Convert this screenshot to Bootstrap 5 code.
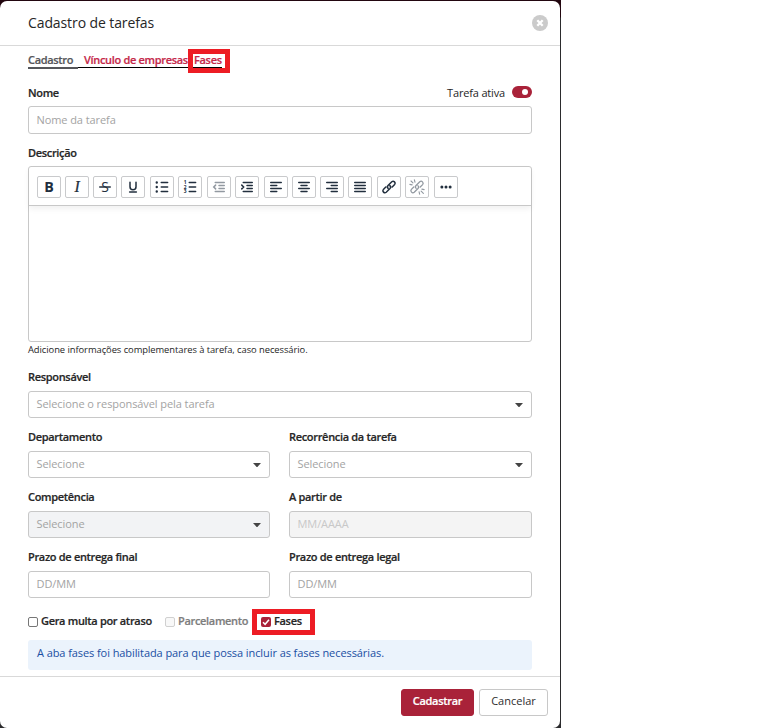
<!DOCTYPE html>
<html lang="pt-BR">
<head>
<meta charset="utf-8">
<title>Cadastro de tarefas</title>
<meta name="viewport" content="width=device-width, initial-scale=1">
<link href="https://cdn.jsdelivr.net/npm/bootstrap@5.3.0/dist/css/bootstrap.min.css" rel="stylesheet">
<style>
body{font-family:"Open Sans","Noto Sans",sans-serif;font-size:11px;line-height:16px;letter-spacing:-.08px;color:#262626;background:#fff;overflow:hidden}
.backdrop-area{width:561px;height:728px;padding:1px 1px 0 0;background:linear-gradient(#22060f 0,#22060f 17px,#2b2b2d 18px)}
.task-dialog{width:560px;height:727px;border-radius:7px}
.dialog-head{height:45px;padding:0 12px 0 28px;border-bottom:1px solid #d9d9d9}
.dialog-title{font-size:14px;line-height:20px;font-weight:400;letter-spacing:-.1px}
.dialog-main{height:630px;padding:0 28px}
.tab-row,.field-title,.check-row,.act-main{font-weight:600;letter-spacing:-.32px;-webkit-text-stroke:.2px currentColor}
.tab-row{height:36px;padding-top:6px}
.tab-row a{color:#c5284a;height:16px;border-bottom:1px solid #000;text-decoration:none;white-space:nowrap}
.tab-row a.current{color:#55565a;border-bottom:2px solid #55565a;height:17px;width:50px}
.tab-row .t-link{width:110px;padding-left:6px}
.tab-row .t-fases{width:34px;padding-left:6px}
.hl{position:absolute;border:5px solid #ed1c24;pointer-events:none}
.hl-tab{left:0;top:-3px;width:42px;height:24px}
.hl-check{left:-9px;top:-4px;width:63px;height:26px}
.field-title{height:24px;padding-top:3px;white-space:nowrap}
.field .field-title{padding-top:2px}
.form-control{height:27px;min-height:0;padding:0 8px 2px 7.5px;font-size:11px;line-height:16px;letter-spacing:-.08px;border:1px solid #c8c8c8;border-radius:3px}
.form-control::placeholder{color:#a3a3a3;opacity:1}
.form-control:disabled{background:#f4f4f4}
.form-control:disabled::placeholder{color:#c8c8c8}
.name-input{height:28px;padding-bottom:2px}
.pick{border:1px solid #c8c8c8;border-radius:3px;height:27px;padding:0 8px 0 7.5px;color:#a3a3a3}
.pick span{padding-bottom:1px}
.pick.off{background:#f2f3f5}
.field{height:60px}
.pair{display:grid;grid-template-columns:242px 243px;column-gap:19px}
.switch-line{padding-top:3px;gap:7px}
.switch-line .state-text{letter-spacing:-.17px}
.switch-pill{width:20px;height:12px;margin-top:1px;border-radius:6px;background:#a92239;padding-right:4px}
.switch-pill i{width:6px;height:6px;border-radius:50%;background:#fff}
.editor{height:176px;border:1px solid #c8c8c8;border-radius:3px}
.editor-bar{height:39px;padding:9px 0 0 8px;border-bottom:1px solid #c8c8c8;box-shadow:0 3px 6px rgba(0,0,0,.06);gap:5px}
.tool-set{gap:4px}
.tool{width:24px;height:22px;border:1px solid #c9cacc;border-radius:2px;background:#fff;color:#222f3e;padding:0}
.tool.off{color:#9299a1}
.tool svg{width:18px;height:18px;display:block;fill:none;stroke:currentColor;stroke-width:2;stroke-linecap:round}
.tool svg text{fill:currentColor;stroke:none;letter-spacing:0}
.tool svg .slanted{stroke:currentColor;stroke-width:.3}
.hint{font-size:9.4px;line-height:14px;padding-top:1px;height:25px;letter-spacing:-.06px}
.check-row{height:33px;padding-top:6px}
.check-row label{height:16px;gap:3px;white-space:nowrap}
.box{width:10px;height:10px;margin-top:4px;border:1px solid #767676;border-radius:2px;background:#fff}
.box.off{border-color:#d0d0d0;background:#f8f8f8}
.box.on{border:0;background:#a92239}
.box svg{display:block}
.lbl-a{width:137px}.lbl-b{width:96px;color:#7d7d7d}
.note{height:30px;background:#ebf3fc;color:#1a4fa3;border-radius:3px;padding:0 9px 4px}
.dialog-foot{height:51px;border-top:1px solid #d9d9d9;padding:12px 12px 0;gap:5px}
.act{height:27px;font-size:11px;line-height:16px;padding:0 0 3px;border-radius:3px}
.act-main{width:73px;background:#a92239;color:#fff;border:1px solid #a92239}
.act-alt{width:69px;background:#fff;color:#2d2d2d;border:1px solid #c8c8c8}
</style>
<script src="https://cdn.jsdelivr.net/npm/bootstrap@5.3.0/dist/js/bootstrap.bundle.min.js"></script>
</head>
<body>
<div class="backdrop-area">
<div class="task-dialog bg-white d-flex flex-column">
  <header class="dialog-head d-flex align-items-center justify-content-between">
    <h1 class="dialog-title mb-0">Cadastro de tarefas</h1>
    <svg width="16" height="16" viewBox="0 0 16 16"><circle cx="8" cy="8" r="8" fill="#cbcbcb"/><path d="M5.3 5.3l5.4 5.4M10.7 5.3l-5.4 5.4" stroke="#fff" stroke-width="2.3"/></svg>
  </header>
  <main class="dialog-main">
    <nav class="tab-row d-flex">
      <a class="current" href="#">Cadastro</a>
      <a class="t-link" href="#">Vínculo de empresas</a>
      <a class="t-fases position-relative" href="#">Fases<span class="hl hl-tab"></span></a>
    </nav>
    <div class="d-flex justify-content-between">
      <label class="field-title" for="nome">Nome</label>
      <div class="switch-line d-flex align-items-start"><span class="state-text">Tarefa ativa</span><span class="switch-pill d-flex align-items-center justify-content-end"><i></i></span></div>
    </div>
    <input id="nome" class="form-control name-input" placeholder="Nome da tarefa">
    <div class="field-title mt-2">Descrição</div>
    <div class="editor">
      <div class="editor-bar d-flex">
        <div class="tool-set d-flex">
          <button class="tool d-flex align-items-center justify-content-center" aria-label="Negrito"><svg viewBox="0 0 24 24"><text x="12" y="18" text-anchor="middle" font-size="19" font-weight="700">B</text></svg></button>
          <button class="tool d-flex align-items-center justify-content-center" aria-label="Itálico"><svg viewBox="0 0 24 24"><text class="slanted" x="12" y="18.5" text-anchor="middle" font-size="21" font-style="italic" font-family="Liberation Serif">I</text></svg></button>
          <button class="tool d-flex align-items-center justify-content-center" aria-label="Tachado"><svg viewBox="0 0 24 24"><text x="12" y="18.4" text-anchor="middle" font-size="18.5" font-weight="500">S</text><path d="M5 12h14"/></svg></button>
          <button class="tool d-flex align-items-center justify-content-center" aria-label="Sublinhado"><svg viewBox="0 0 24 24"><path d="M8 5.5v6a4 4 0 0 0 8 0v-6M7.500 18.500h9"/></svg></button>
        </div>
        <div class="tool-set d-flex">
          <button class="tool d-flex align-items-center justify-content-center" aria-label="Lista"><svg viewBox="0 0 24 24"><path d="M11 6h8.5M11 12h8.5M11 18h8.5"/><path d="M5 6h.01M5 12h.01M5 18h.01" stroke-width="3.2"/></svg></button>
          <button class="tool d-flex align-items-center justify-content-center" aria-label="Lista numerada"><svg viewBox="0 0 24 24"><path d="M11 6h8.5M11 12h8.5M11 18h8.5"/><g font-size="6.500" font-weight="700" text-anchor="middle"><text x="5.5" y="8.400">1</text><text x="5.5" y="14.500">2</text><text x="5.5" y="20.600">3</text></g></svg></button>
        </div>
        <div class="tool-set d-flex">
          <button class="tool off d-flex align-items-center justify-content-center" aria-label="Diminuir recuo"><svg viewBox="0 0 24 24"><path d="M7 6h12M12 10h7M12 14h7M7 18h12M7.5 9.5L5 12l2.500 2.500"/></svg></button>
          <button class="tool d-flex align-items-center justify-content-center" aria-label="Aumentar recuo"><svg viewBox="0 0 24 24"><path d="M7 6h12M12 10h7M12 14h7M7 18h12M5 9.5L7.5 12 5 14.5"/></svg></button>
        </div>
        <div class="tool-set d-flex">
          <button class="tool d-flex align-items-center justify-content-center" aria-label="Esquerda"><svg viewBox="0 0 24 24"><path d="M5 6h14M5 10h8M5 14h14M5 18h8"/></svg></button>
          <button class="tool d-flex align-items-center justify-content-center" aria-label="Centro"><svg viewBox="0 0 24 24"><path d="M5 6h14M8 10h8M5 14h14M8 18h8"/></svg></button>
          <button class="tool d-flex align-items-center justify-content-center" aria-label="Direita"><svg viewBox="0 0 24 24"><path d="M5 6h14M11 10h8M5 14h14M11 18h8"/></svg></button>
          <button class="tool d-flex align-items-center justify-content-center" aria-label="Justificado"><svg viewBox="0 0 24 24"><path d="M5 6h14M5 10h14M5 14h14M5 18h14"/></svg></button>
        </div>
        <div class="tool-set d-flex">
          <button class="tool d-flex align-items-center justify-content-center" aria-label="Link"><svg viewBox="0 0 24 24"><path d="M10.800 13.800a2.700 2.700 0 0 1-.1-3.800l5-5a2.700 2.700 0 0 1 3.800 3.800l-3.200 3.200M13.200 10.200a2.700 2.700 0 0 1 .1 3.800l-5 5a2.700 2.700 0 0 1-3.800-3.800l3.200-3.200"/></svg></button>
          <button class="tool off d-flex align-items-center justify-content-center" aria-label="Remover link"><svg viewBox="0 0 24 24"><path stroke-width="1.700" d="M10.800 13.800a2.700 2.700 0 0 1-.1-3.800l5-5a2.700 2.700 0 0 1 3.800 3.800l-3.200 3.200M13.200 10.200a2.700 2.700 0 0 1 .1 3.800l-5 5a2.700 2.700 0 0 1-3.800-3.800l3.200-3.200"/><path stroke-width="1.500" d="M2.500 8.500l3 .7M4 4l2.600 2.600M8.500 2.500l.8 3M21.500 15.500l-3-.7M20.500 20.500l-3-3M15.500 21.500l-.7-3"/></svg></button>
        </div>
        <div class="tool-set d-flex">
          <button class="tool d-flex align-items-center justify-content-center" aria-label="Mais"><svg viewBox="0 0 24 24"><path d="M6.500 12h.01M12 12h.01M17.500 12h.01" stroke-width="4"/></svg></button>
        </div>
      </div>
    </div>
    <div class="hint">Adicione informações complementares à tarefa, caso necessário.</div>
    <div class="field">
      <div class="field-title">Responsável</div>
      <div class="pick d-flex align-items-center justify-content-between"><span>Selecione o responsável pela tarefa</span><svg width="8" height="4" viewBox="0 0 8 4"><path d="M0 0h8L4.600 3.700a.9.9 0 0 1-1.200 0z" fill="#444"/></svg></div>
    </div>
    <div class="pair">
      <div class="field">
        <div class="field-title">Departamento</div>
        <div class="pick d-flex align-items-center justify-content-between"><span>Selecione</span><svg width="8" height="4" viewBox="0 0 8 4"><path d="M0 0h8L4.600 3.700a.9.9 0 0 1-1.200 0z" fill="#444"/></svg></div>
      </div>
      <div class="field">
        <div class="field-title">Recorrência da tarefa</div>
        <div class="pick d-flex align-items-center justify-content-between"><span>Selecione</span><svg width="8" height="4" viewBox="0 0 8 4"><path d="M0 0h8L4.600 3.700a.9.9 0 0 1-1.200 0z" fill="#444"/></svg></div>
      </div>
      <div class="field">
        <div class="field-title">Competência</div>
        <div class="pick off d-flex align-items-center justify-content-between"><span>Selecione</span><svg width="8" height="4" viewBox="0 0 8 4"><path d="M0 0h8L4.600 3.700a.9.9 0 0 1-1.200 0z" fill="#444"/></svg></div>
      </div>
      <div class="field">
        <div class="field-title">A partir de</div>
        <input class="form-control" placeholder="MM/AAAA" disabled>
      </div>
      <div class="field">
        <div class="field-title">Prazo de entrega final</div>
        <input class="form-control" placeholder="DD/MM">
      </div>
      <div class="field">
        <div class="field-title">Prazo de entrega legal</div>
        <input class="form-control" placeholder="DD/MM">
      </div>
    </div>
    <div class="check-row d-flex">
      <label class="lbl-a d-flex"><span class="box"></span>Gera multa por atraso</label>
      <label class="lbl-b d-flex"><span class="box off"></span>Parcelamento</label>
      <label class="d-flex position-relative"><span class="box on"><svg width="10" height="10" viewBox="0 0 10 10"><path d="M2 5.200l2.100 2.100L8 2.700" fill="none" stroke="#fff" stroke-width="1.500"/></svg></span>Fases<span class="hl hl-check"></span></label>
    </div>
    <div class="note d-flex align-items-center">A aba fases foi habilitada para que possa incluir as fases necessárias.</div>
  </main>
  <footer class="dialog-foot d-flex justify-content-end">
    <button class="btn act act-main">Cadastrar</button>
    <button class="btn act act-alt">Cancelar</button>
  </footer>
</div>
</div>
</body>
</html>
